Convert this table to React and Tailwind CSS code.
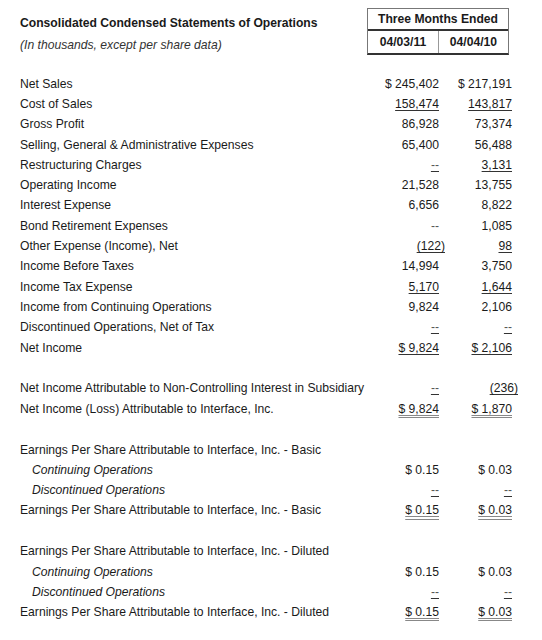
import React from "react";

// u: "single" | "double"
const sections = [
  [
    { label: "Net Sales", a: "$ 245,402", b: "$ 217,191" },
    { label: "Cost of Sales", a: "158,474", b: "143,817", ua: "single", ub: "single" },
    { label: "Gross Profit", a: "86,928", b: "73,374" },
    { label: "Selling, General & Administrative Expenses", a: "65,400", b: "56,488" },
    { label: "Restructuring Charges", a: "--", b: "3,131", ua: "single", ub: "single" },
    { label: "Operating Income", a: "21,528", b: "13,755" },
    { label: "Interest Expense", a: "6,656", b: "8,822" },
    { label: "Bond Retirement Expenses", a: "--", b: "1,085" },
    { label: "Other Expense (Income), Net", a: "(122)", b: "98", ua: "single", ub: "single" },
    { label: "Income Before Taxes", a: "14,994", b: "3,750" },
    { label: "Income Tax Expense", a: "5,170", b: "1,644", ua: "single", ub: "single" },
    { label: "Income from Continuing Operations", a: "9,824", b: "2,106" },
    { label: "Discontinued Operations, Net of Tax", a: "--", b: "--", ua: "single", ub: "single" },
    { label: "Net Income", a: "$ 9,824", b: "$ 2,106", ua: "single", ub: "single" },
  ],
  [
    { label: "Net Income Attributable to Non-Controlling Interest in Subsidiary", a: "--", b: "(236)", ua: "single", ub: "single" },
    { label: "Net Income (Loss) Attributable to Interface, Inc.", a: "$ 9,824", b: "$ 1,870", ua: "double", ub: "double" },
  ],
  [
    { label: "Earnings Per Share Attributable to Interface, Inc. - Basic" },
    { label: "Continuing Operations", a: "$ 0.15", b: "$ 0.03", indent: true },
    { label: "Discontinued Operations", a: "--", b: "--", ua: "single", ub: "single", indent: true },
    { label: "Earnings Per Share Attributable to Interface, Inc. - Basic", a: "$ 0.15", b: "$ 0.03", ua: "double", ub: "double" },
  ],
  [
    { label: "Earnings Per Share Attributable to Interface, Inc. - Diluted" },
    { label: "Continuing Operations", a: "$ 0.15", b: "$ 0.03", indent: true },
    { label: "Discontinued Operations", a: "--", b: "--", ua: "single", ub: "single", indent: true },
    { label: "Earnings Per Share Attributable to Interface, Inc. - Diluted", a: "$ 0.15", b: "$ 0.03", ua: "double", ub: "double" },
  ],
];

function Amount({ value, u }) {
  if (!value) return <div />;
  const negative = value.startsWith("(");
  const dash = value === "--";
  let cls = "";
  if (u === "single") cls = "underline decoration-[#333] underline-offset-[2px]";
  if (u === "double") cls = "underline decoration-double decoration-[#888] underline-offset-[2px]";
  return (
    <div className="flex justify-end">
      <span className={`${cls} ${negative ? "-mr-[6px]" : ""} ${dash ? "text-[#555]" : "text-[#1a1a1a]"}`}>{value}</span>
    </div>
  );
}

export default function App() {
  return (
    <div className="w-[542px] h-[640px] bg-white text-[#1a1a1a] text-[12.15px] font-['Liberation_Sans',Arial,sans-serif] overflow-hidden">
      <div className="flex h-[74px] items-start pl-[20px] pr-[33px]">
        <div>
          <div className="mt-[16px] leading-[15px] font-bold">Consolidated Condensed Statements of Operations</div>
          <div className="mt-[7px] leading-[15px] italic text-[#333]">(In thousands, except per share data)</div>
        </div>
        <div className="ml-auto mt-[8px] w-[142px] border border-[#777] border-b-2 border-b-[#333] font-bold">
          <div className="h-[22px] flex items-center justify-center border-b-2 border-[#333]">Three Months Ended</div>
          <div className="h-[22px] grid grid-cols-[71px_1fr]">
            <div className="flex items-center justify-center border-r border-[#999]">04/03/11</div>
            <div className="flex items-center justify-center">04/04/10</div>
          </div>
        </div>
      </div>

      <div className="pl-[20px]">
        {sections.map((rows, si) => (
          <div key={si} className={si > 0 ? "mt-[20.6px]" : ""}>
            {rows.map((r, i) => (
              <div key={i} className="grid grid-cols-[346px_73px_73px] h-[20.3px] items-center leading-[15px]">
                <div className={r.indent ? "pl-[12px] italic" : ""}>{r.label}</div>
                <Amount value={r.a} u={r.ua} />
                <Amount value={r.b} u={r.ub} />
              </div>
            ))}
          </div>
        ))}
      </div>
    </div>
  );
}
